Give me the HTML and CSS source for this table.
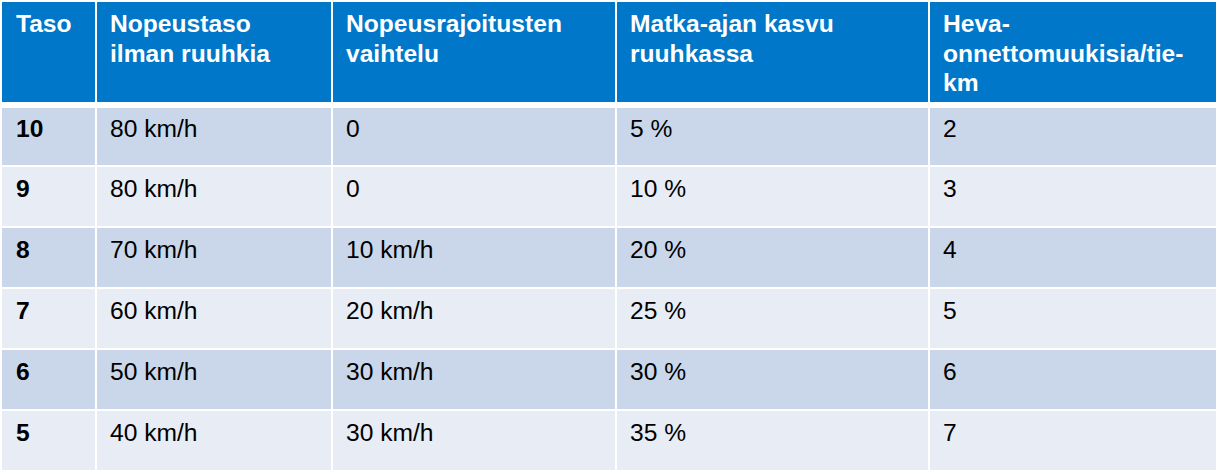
FILE: index.html
```html
<!DOCTYPE html>
<html lang="fi">
<head>
<meta charset="utf-8">
<title>Taso</title>
<link rel="stylesheet" href="styles.css">
</head>
<body>
<table class="levels">
  <colgroup>
    <col class="c1"><col class="c2"><col class="c3"><col class="c4"><col class="c5">
  </colgroup>
  <thead>
    <tr>
      <th>Taso</th>
      <th>Nopeustaso<br>ilman ruuhkia</th>
      <th>Nopeusrajoitusten<br>vaihtelu</th>
      <th>Matka-ajan kasvu<br>ruuhkassa</th>
      <th>Heva-<br>onnettomuukisia/tie-<br>km</th>
    </tr>
  </thead>
  <tbody>
    <tr class="odd first"><td class="lvl">10</td><td>80 km/h</td><td>0</td><td>5 %</td><td>2</td></tr>
    <tr class="even"><td class="lvl">9</td><td>80 km/h</td><td>0</td><td>10 %</td><td>3</td></tr>
    <tr class="odd"><td class="lvl">8</td><td>70 km/h</td><td>10 km/h</td><td>20 %</td><td>4</td></tr>
    <tr class="even"><td class="lvl">7</td><td>60 km/h</td><td>20 km/h</td><td>25 %</td><td>5</td></tr>
    <tr class="odd"><td class="lvl">6</td><td>50 km/h</td><td>30 km/h</td><td>30 %</td><td>6</td></tr>
    <tr class="even"><td class="lvl">5</td><td>40 km/h</td><td>30 km/h</td><td>35 %</td><td>7</td></tr>
  </tbody>
</table>
</body>
</html>
```
FILE: styles.css
```css
html, body {
  margin: 0;
  padding: 0;
  background: #ffffff;
}

.levels {
  width: 1218px;
  border-collapse: separate;
  border-spacing: 2px;
  table-layout: fixed;
  font-family: "Liberation Sans", Arial, sans-serif;
}

.c1 { width: 93px; }
.c2 { width: 234px; }
.c3 { width: 282px; }
.c4 { width: 311px; }
.c5 { width: 286px; }

.levels th,
.levels td {
  padding: 0 8px 0 13px;
  vertical-align: top;
  text-align: left;
  overflow: hidden;
  white-space: nowrap;
}

.levels th {
  box-sizing: border-box;
  height: 104px;
  padding-top: 7px;
  background: #0077c8;
  color: #ffffff;
  font-size: 24.6px;
  font-weight: bold;
  line-height: 29.5px;
  border-bottom: 4px solid #ffffff;
}

.levels td {
  box-sizing: border-box;
  height: 59px;
  padding-top: 7px;
  color: #000000;
  font-size: 24.6px;
  line-height: 29px;
}

.levels tr.first td {
  height: 57px;
  padding-top: 6px;
}

.levels td.lvl {
  font-weight: bold;
  padding-left: 14px;
}

.levels th:first-child {
  padding-left: 14px;
}

.levels tr.odd td { background: #cad7ea; }
.levels tr.even td { background: #e8ecf5; }
```
